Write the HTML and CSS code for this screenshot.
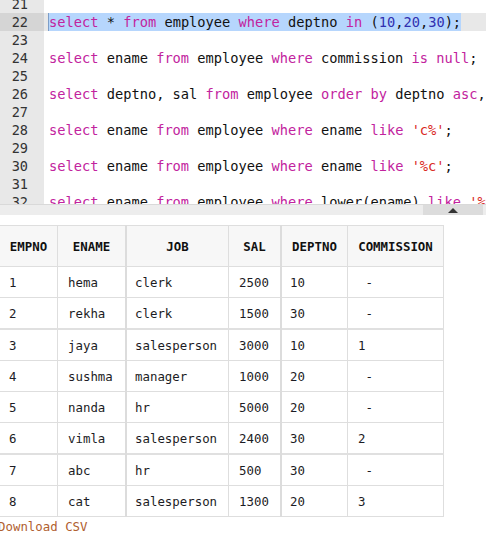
FILE: index.html
```html
<!DOCTYPE html>
<html>
<head>
<meta charset="utf-8">
<link rel="stylesheet" href="styles.css">
</head>
<body>
<div class="editor">
  <div class="lines">
    <div class="line"><span class="gut">21</span><span class="code"></span></div>
    <div class="line active"><span class="gut">22</span><span class="code"><span class="sel"><span class="kw">select</span> * <span class="kw">from</span> employee <span class="kw">where</span> deptno <span class="kw">in</span> (<span class="num">10</span>,<span class="num">20</span>,<span class="num">30</span>);</span></span></div>
    <div class="line"><span class="gut">23</span><span class="code"></span></div>
    <div class="line"><span class="gut">24</span><span class="code"><span class="kw">select</span> ename <span class="kw">from</span> employee <span class="kw">where</span> commission <span class="kw">is</span> <span class="kw">null</span>;</span></div>
    <div class="line"><span class="gut">25</span><span class="code"></span></div>
    <div class="line"><span class="gut">26</span><span class="code"><span class="kw">select</span> deptno, sal <span class="kw">from</span> employee <span class="kw">order</span> <span class="kw">by</span> deptno <span class="kw">asc</span>, sal</span></div>
    <div class="line"><span class="gut">27</span><span class="code"></span></div>
    <div class="line"><span class="gut">28</span><span class="code"><span class="kw">select</span> ename <span class="kw">from</span> employee <span class="kw">where</span> ename <span class="kw">like</span> <span class="str">'c%'</span>;</span></div>
    <div class="line"><span class="gut">29</span><span class="code"></span></div>
    <div class="line"><span class="gut">30</span><span class="code"><span class="kw">select</span> ename <span class="kw">from</span> employee <span class="kw">where</span> ename <span class="kw">like</span> <span class="str">'%c'</span>;</span></div>
    <div class="line"><span class="gut">31</span><span class="code"></span></div>
    <div class="line"><span class="gut">32</span><span class="code"><span class="kw">select</span> ename <span class="kw">from</span> employee <span class="kw">where</span> lower(ename) <span class="kw">like</span> <span class="str">'%c%'</span>;</span></div>
  </div>
</div>
<div class="hscroll"><div class="thumb"><span class="arrow"></span></div></div>

<table class="result">
  <thead>
    <tr><th class="c1">EMPNO</th><th class="c2">ENAME</th><th class="c3 thick">JOB</th><th class="c4">SAL</th><th class="c5 thick">DEPTNO</th><th class="c6">COMMISSION</th></tr>
  </thead>
  <tbody>
    <tr><td>1</td><td>hema</td><td class="thick">clerk</td><td>2500</td><td class="thick">10</td><td>&nbsp;-</td></tr>
    <tr><td>2</td><td>rekha</td><td class="thick">clerk</td><td>1500</td><td class="thick">30</td><td>&nbsp;-</td></tr>
    <tr class="thickrow"><td>3</td><td>jaya</td><td class="thick">salesperson</td><td>3000</td><td class="thick">10</td><td>1</td></tr>
    <tr><td>4</td><td>sushma</td><td class="thick">manager</td><td>1000</td><td class="thick">20</td><td>&nbsp;-</td></tr>
    <tr><td>5</td><td>nanda</td><td class="thick">hr</td><td>5000</td><td class="thick">20</td><td>&nbsp;-</td></tr>
    <tr><td>6</td><td>vimla</td><td class="thick">salesperson</td><td>2400</td><td class="thick">30</td><td>2</td></tr>
    <tr class="thickrow"><td>7</td><td>abc</td><td class="thick">hr</td><td>500</td><td class="thick">30</td><td>&nbsp;-</td></tr>
    <tr><td>8</td><td>cat</td><td class="thick">salesperson</td><td>1300</td><td class="thick">20</td><td>3</td></tr>
  </tbody>
</table>
<a class="download">Download CSV</a>
</body>
</html>
```
FILE: styles.css
```css
html, body {
  margin: 0;
  padding: 0;
  background: #fff;
}
body {
  width: 486px;
  overflow: hidden;
  font-family: "DejaVu Sans Mono", "Liberation Mono", monospace;
}
.editor {
  height: 204px;
  overflow: hidden;
  background: #fff;
}
.lines {
  margin-top: -5px;
  font-size: 13.7px;
}
.line {
  display: flex;
  height: 18px;
  line-height: 18px;
  white-space: pre;
}
.gut {
  flex: 0 0 44px;
  box-sizing: border-box;
  text-align: right;
  padding-right: 16px;
  background: #e8e8e8;
  color: #333;
  font-size: 13.6px;
}
.code {
  flex: 1;
  padding-left: 5px;
  color: #111;
}
.active .gut {
  background: #d5d5d5;
}
.active .code {
  background: #e8e8e8;
  padding-left: 4px;
}
.sel {
  background: #b6d6fd;
  border-left: 1px solid #7d9ec8;
  display: inline-block;
  height: 18px;
}
.kw { color: #c2239e; }
.num { color: #3030b0; }
.str { color: #d9281e; }
.hscroll {
  height: 10px;
  border-top: 1px solid #d9d9d9;
  background: #ededed;
  display: flex;
  justify-content: flex-end;
  padding-right: 3px;
}
.thumb {
  width: 60px;
  background: #dcdcdc;
  display: flex;
  align-items: center;
  justify-content: center;
}
.arrow {
  width: 0;
  height: 0;
  border-left: 5px solid transparent;
  border-right: 5px solid transparent;
  border-bottom: 5px solid #333;
}
.result {
  margin-top: 10px;
  border-collapse: collapse;
  width: 436px;
  font-size: 12.4px;
  color: #1c1c24;
  table-layout: fixed;
}
.result th, .result td {
  border: 1px solid #dedede;
  padding: 0 0 0 10px;
  text-align: left;
  white-space: pre;
}
.result td:first-child {
  padding-left: 9px;
}
.result th {
  background: #f7f7f7;
  height: 40px;
  font-weight: bold;
  text-align: center;
  padding: 0;
  color: #111;
}
.result td {
  height: 30px;
}
.result th:first-child, .result td:first-child {
  border-left: none;
}
.result .thick {
  border-left: 2px solid #dcdcdc;
}
.result td.thick {
  padding-left: 8px;
}
.result tr.thickrow td {
  border-top: 2px solid #e0e0e0;
}
.c1 { width: 57px; }
.c2 { width: 67px; }
.c3 { width: 101px; }
.c4 { width: 51px; }
.c5 { width: 65px; }
.c6 { width: 95px; }
.download {
  display: block;
  margin-left: -2px;
  margin-top: 2px;
  font-size: 12.4px;
  color: #b0602f;
}
```
